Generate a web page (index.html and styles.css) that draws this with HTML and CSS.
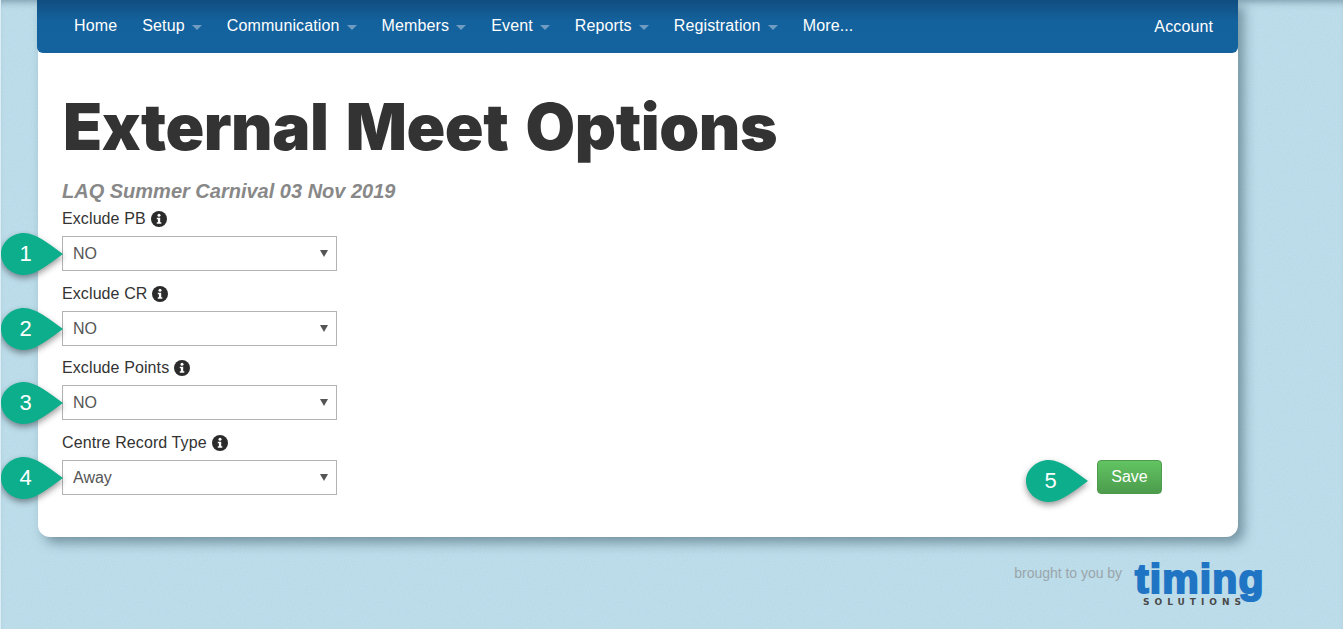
FILE: index.html
```html
<!DOCTYPE html>
<html lang="en">
<head>
    <meta charset="UTF-8">
    <title>External Meet Options</title>
    <link rel="stylesheet" href="styles.css">
</head>
<body>
    <div class="page">
        <nav class="navbar">
            <ul class="nav">
                <li>Home</li>
                <li>Setup<span class="caret"></span></li>
                <li>Communication<span class="caret"></span></li>
                <li>Members<span class="caret"></span></li>
                <li>Event<span class="caret"></span></li>
                <li>Reports<span class="caret"></span></li>
                <li>Registration<span class="caret"></span></li>
                <li>More...</li>
            </ul>
            <div class="account">Account</div>
        </nav>

        <main class="card">
            <h1>External Meet Options</h1>
            <h4>LAQ Summer Carnival 03 Nov 2019</h4>
            <div class="form-area">
                <form class="fields">
                    <div class="field">
                        <label>Exclude PB <svg class="info" viewBox="0 0 16 16"><use href="#info"/></svg></label>
                        <div class="select-wrap">
                            <span class="callout"><svg viewBox="0 0 64 44"><use href="#drop"/></svg><b>1</b></span>
                            <select><option>NO</option><option>YES</option></select>
                        </div>
                    </div>
                    <div class="field">
                        <label>Exclude CR <svg class="info" viewBox="0 0 16 16"><use href="#info"/></svg></label>
                        <div class="select-wrap">
                            <span class="callout"><svg viewBox="0 0 64 44"><use href="#drop"/></svg><b>2</b></span>
                            <select><option>NO</option><option>YES</option></select>
                        </div>
                    </div>
                    <div class="field">
                        <label>Exclude Points <svg class="info" viewBox="0 0 16 16"><use href="#info"/></svg></label>
                        <div class="select-wrap">
                            <span class="callout"><svg viewBox="0 0 64 44"><use href="#drop"/></svg><b>3</b></span>
                            <select><option>NO</option><option>YES</option></select>
                        </div>
                    </div>
                    <div class="field">
                        <label>Centre Record Type <svg class="info" viewBox="0 0 16 16"><use href="#info"/></svg></label>
                        <div class="select-wrap">
                            <span class="callout"><svg viewBox="0 0 64 44"><use href="#drop"/></svg><b>4</b></span>
                            <select><option>Away</option><option>Home</option></select>
                        </div>
                    </div>
                </form>
                <div class="save-wrap">
                    <span class="callout callout-save"><svg viewBox="0 0 64 44"><use href="#drop"/></svg><b>5</b></span>
                    <button type="button" class="btn-save">Save</button>
                </div>
            </div>
        </main>

        <footer class="footer">
            <span class="brought">brought to you by</span>
            <div class="logo">
                <span class="logo-name">timing</span>
                <span class="logo-sub">SOLUTIONS</span>
            </div>
        </footer>
    </div>

    <svg class="defs" width="0" height="0">
        <defs>
            <path id="drop" d="M24 1C36 1 49 12 63 22C49 32 36 43 24 43C11 43 1 33 1 22C1 11 11 1 24 1Z"/>
            <g id="info">
                <circle cx="8" cy="8" r="8" fill="#2b2b2b"/>
                <circle cx="8" cy="4.2" r="1.5" fill="#fff"/>
                <path d="M5.8 6.7H9.2V11.2H10.3V12.7H5.8V11.2H6.9V8.2H5.8Z" fill="#fff"/>
            </g>
        </defs>
    </svg>
</body>
</html>
```

FILE: styles.css
```css
body { margin: 0; height: 629px; overflow: hidden; background-color: #b8dae8; background-image: url("data:image/svg+xml,%3Csvg xmlns='http://www.w3.org/2000/svg' width='240' height='240'%3E%3Cfilter id='n'%3E%3CfeTurbulence type='fractalNoise' baseFrequency='0.7' numOctaves='2'/%3E%3CfeColorMatrix values='0 0 0 0 1 0 0 0 0 1 0 0 0 0 1 0.6 0 0 0 -0.15'/%3E%3C/filter%3E%3Crect width='240' height='240' filter='url(%23n)' opacity='0.35'/%3E%3C/svg%3E"); box-shadow: inset 0 7px 7px -5px rgba(60, 90, 110, 0.5); border-left: 1px solid #dceef5; font-family: "Liberation Sans", Arial, sans-serif; color: #333; }
.page { width: 1201px; margin-left: 36px; }
.defs { display: block; }

.navbar { display: flex; justify-content: space-between; height: 53px; padding: 0 25px 0 37px; box-sizing: border-box; background: linear-gradient(#104d80, #14629d 40%, #14639e); border-radius: 0 0 6px 6px; color: #fff; font-size: 16px; letter-spacing: 0.12px; line-height: 51px; position: relative; z-index: 1; }
.nav { display: flex; gap: 25.1px; list-style: none; margin: 0; padding: 0; }
.caret { display: inline-block; width: 0; height: 0; margin-left: 7px; vertical-align: 1px; border-left: 5px solid transparent; border-right: 5px solid transparent; border-top: 5px solid #6f9cc0; }
.account { line-height: 53px; }

.card { margin-left: 1px; height: 537px; margin-top: -53px; padding: 53px 24px 0; box-sizing: border-box; background: #fff; border-radius: 0 0 12px 12px; box-shadow: 6px 6px 12px rgba(70, 100, 115, 0.6); }
h1 { margin: 0 0 0 1px; padding-top: 34px; font-family: Inter, "Liberation Sans", sans-serif; font-size: 64px; line-height: 80px; font-weight: 900; letter-spacing: -0.45px; word-spacing: 5px; color: #333; white-space: nowrap; }
h4 { margin: 10px 0 0; font-size: 20px; line-height: 28px; font-style: italic; font-weight: bold; color: #888; }

.form-area { display: flex; justify-content: space-between; align-items: flex-end; padding: 4px 52px 0 0; }
.field { height: 74.5px; }
.field:last-child { height: 62px; }
label { display: flex; align-items: center; gap: 5px; height: 20px; margin-bottom: 7px; font-size: 16px; letter-spacing: 0.1px; color: #333; }
.info { width: 16px; height: 16px; }
.select-wrap { position: relative; width: 275px; height: 35px; }
.select-wrap::after { content: ""; position: absolute; right: 9px; top: 14px; border-left: 4px solid transparent; border-right: 4px solid transparent; border-top: 7px solid #555; }
select { display: block; width: 100%; height: 35px; padding: 0 10px; border: 1px solid #b3b3b3; background: #fff; appearance: none; font-family: inherit; font-size: 16px; color: #555; border-radius: 0; }

.callout { position: absolute; left: -62px; top: -4px; width: 64px; height: 44px; z-index: 1; fill: #0cae8b; }
.callout svg { display: block; width: 64px; height: 44px; overflow: visible; filter: drop-shadow(0 3px 3px rgba(0, 0, 0, 0.4)); }
.callout b { position: absolute; left: 0; top: 0; width: 51px; text-align: center; font-weight: normal; font-size: 22px; line-height: 44px; color: #fff; }
.callout-save { left: -72px; top: -1px; }

.save-wrap { position: relative; }
.btn-save { display: block; width: 65px; height: 34px; padding: 0; border: 1px solid #4f9a4f; border-radius: 4px; background: linear-gradient(#62c462, #4c9c4c); color: #fff; font-family: inherit; font-size: 16px; margin-bottom: 1px; }

.footer { display: flex; justify-content: flex-end; align-items: flex-start; gap: 13px; padding: 25px 0 0; margin-right: -24px; }
.brought { margin-top: 3px; margin-right: 0; font-size: 14px; letter-spacing: -0.03px; color: #9aa5ab; }
.logo { display: flex; flex-direction: column; width: 127px; }
.logo-name { font-family: "Liberation Sans", sans-serif; font-weight: bold; font-size: 41px; line-height: 35px; letter-spacing: 1.1px; color: #1f75c4; -webkit-text-stroke: 2px #1f75c4; }
.logo-sub { margin-left: 8px; font-family: "DejaVu Sans", sans-serif; font-weight: bold; font-size: 9px; line-height: 10px; letter-spacing: 5px; color: #4a4a4a; }
```
